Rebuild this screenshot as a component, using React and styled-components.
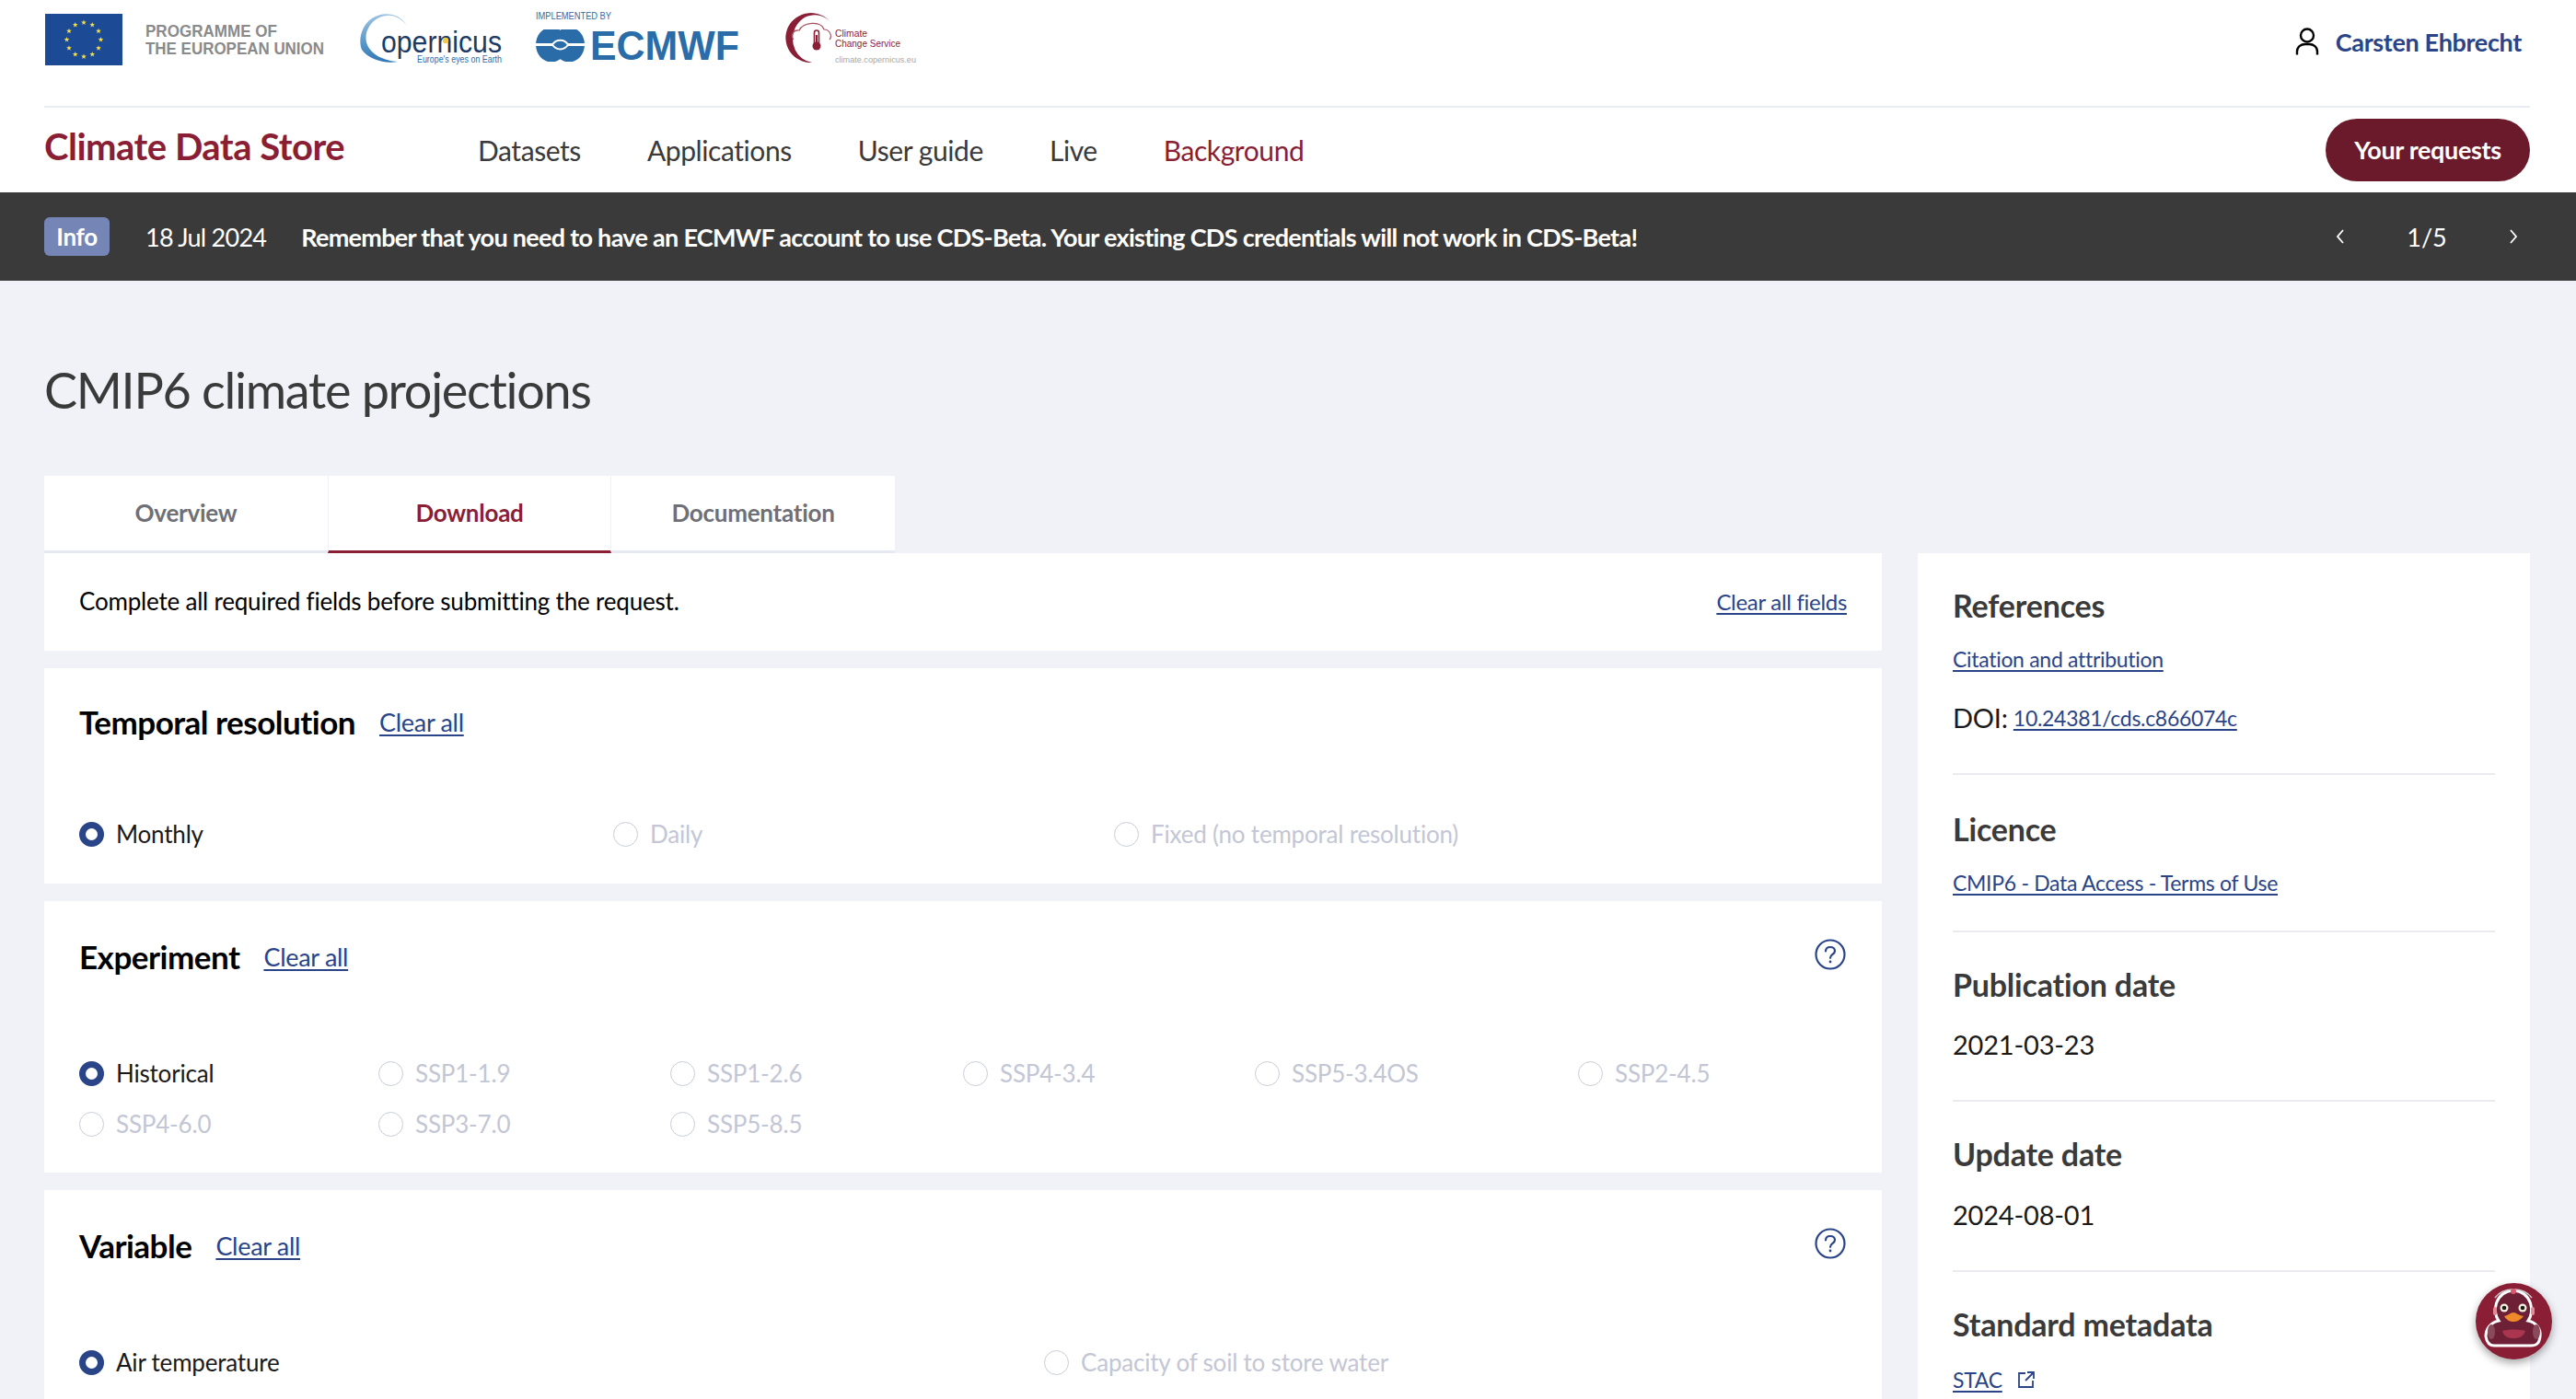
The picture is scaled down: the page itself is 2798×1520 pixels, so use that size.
import React from 'react';
import styled, { createGlobalStyle } from 'styled-components';

const GlobalStyle = createGlobalStyle`
  html, body {
    margin: 0;
    height: 100%;
    overflow: hidden;
    background: #f0f2f7;
    font-family: Lato, "Open Sans", sans-serif;
    color: #000;
  }
  * { box-sizing: border-box; }
`;

const Header = styled.header`
  background: #fff;
  padding: 0 50px 0 48px;
`;

const LogoRow = styled.div`
  height: 117px;
  display: flex;
  align-items: flex-start;
  justify-content: space-between;
  border-bottom: 2px solid #e9ebf3;
`;

const Logos = styled.div`
  display: flex;
  align-items: flex-start;
`;

const Logo = styled.svg`
  display: block;
  flex: none;
  margin-left: ${props => props.$gap || 0}px;
`;

const UserBox = styled.a`
  display: flex;
  align-items: center;
  gap: 18px;
  height: 90px;
  padding-right: 9px;
  color: #2a4488;
  font-size: 27px;
  font-weight: 700;
  letter-spacing: -0.35px;
`;

const NavRow = styled.nav`
  height: 92px;
  display: flex;
  align-items: center;
`;

const Brand = styled.div`
  width: 471px;
  margin-top: -8px;
  color: #8a1e35;
  font-size: 40px;
  font-weight: 700;
  letter-spacing: -0.5px;
`;

const NavList = styled.ul`
  display: flex;
  gap: 72px;
  flex: 1;
  margin: 0;
  padding: 0;
  list-style: none;
`;

const NavItem = styled.li`
  color: ${props => props.$active ? '#8a1e35' : '#3a3a3a'};
  font-size: 30px;
  letter-spacing: -0.42px;
`;

const RequestsButton = styled.button`
  width: 222px;
  height: 68px;
  padding: 0 0 2px;
  border: none;
  border-radius: 34px;
  background: #6b1a2b;
  color: #fff;
  font-family: inherit;
  font-size: 27px;
  font-weight: 700;
  letter-spacing: -0.35px;
`;

const Banner = styled.div`
  height: 96px;
  display: flex;
  align-items: center;
  padding: 0 48px;
  background: #3a3a3a;
  color: #fff;
`;

const Badge = styled.span`
  width: 71px;
  height: 42px;
  display: flex;
  align-items: center;
  justify-content: center;
  border-radius: 6px;
  background: #7586b6;
  font-size: 26px;
  font-weight: 700;
  letter-spacing: -0.3px;
`;

const BannerDate = styled.span`
  margin-left: 39px;
  font-size: 27px;
  letter-spacing: -0.75px;
`;

const BannerText = styled.strong`
  margin-left: 38px;
  flex: 1;
  font-size: 27px;
  letter-spacing: -0.7px;
`;

const Pager = styled.div`
  display: flex;
  align-items: center;
  width: 216px;
  justify-content: space-between;
  padding-right: 16px;
  font-size: 27px;
  margin-right: -2px;
`;

const Title = styled.h1`
  margin: 0;
  padding: 86px 48px 0;
  height: 212px;
  color: #3a3a3a;
  font-size: 54px;
  font-weight: 400;
  line-height: 66px;
  letter-spacing: -1.3px;
`;

const Tabs = styled.div`
  display: flex;
  margin-left: 48px;
`;

const Tab = styled.div`
  width: 308px;
  height: 84px;
  padding-top: 24px;
  background: #fff;
  border-bottom: 3px solid ${props => props.$active ? '#8a1e35' : '#e6e9f1'};
  border-left: ${props => props.$active ? '1px solid #f0f2f7' : 'none'};
  border-right: ${props => props.$active ? '1px solid #f0f2f7' : 'none'};
  color: ${props => props.$active ? '#8a1e35' : '#6f7076'};
  font-size: 26px;
  font-weight: 700;
  line-height: 32px;
  letter-spacing: -0.25px;
  text-align: center;
`;

const Columns = styled.div`
  display: flex;
  align-items: flex-start;
  gap: 39px;
  padding: 0 50px 0 48px;
`;

const FormColumn = styled.main`
  width: 1996px;
  flex: none;
  display: flex;
  flex-direction: column;
  gap: 19px;
`;

const NoticePanel = styled.section`
  height: 106px;
  display: flex;
  align-items: center;
  justify-content: space-between;
  padding: 0 38px 2px 38px;
  background: #fff;
  font-size: 26px;
  letter-spacing: -0.2px;
`;

const TextLink = styled.a`
  color: #2a4488;
  font-size: ${props => props.$size || 27}px;
  text-decoration: underline;
  text-underline-offset: 3px;
  text-decoration-thickness: 2px;
  letter-spacing: -0.3px;
`;

const Panel = styled.section`
  height: ${props => props.$height}px;
  padding: ${props => props.$top || 39}px 39px 0 38px;
  background: #fff;
`;

const PanelHead = styled.div`
  height: 42px;
  display: flex;
  align-items: center;
  gap: 26px;
`;

const PanelTitle = styled.h2`
  margin: 0;
  font-size: 35px;
  font-weight: 700;
  letter-spacing: -0.5px;
`;

const HelpButton = styled.span`
  margin-left: auto;
  margin-top: -4px;
  display: flex;
`;

const RadioGrid = styled.div`
  display: grid;
  grid-template-columns: ${props => props.$columns};
  row-gap: 13px;
  margin-top: ${props => props.$top || 85}px;
`;

const Radio = styled.label`
  height: 42px;
  display: flex;
  align-items: center;
  gap: 13px;
  color: ${props => props.$disabled ? '#c3c6d4' : '#1a1a1a'};
  font-size: 26px;
  letter-spacing: -0.2px;
  white-space: nowrap;
`;

const RadioMark = styled.span`
  width: 27px;
  height: 27px;
  flex: none;
  border-radius: 50%;
  background: #fff;
  border: ${props => props.$checked ? '7px solid #2a4488' : '1.5px solid #c9ccd8'};
`;

const Sidebar = styled.aside`
  width: 665px;
  height: 930px;
  flex: none;
  padding: 0 38px;
  background: #fff;
`;

const SideSection = styled.div`
  height: ${props => props.$height}px;
  padding-top: ${props => props.$top || 36}px;
  border-bottom: ${props => props.$last ? 'none' : '2px solid #e9ebf0'};
`;

const SideTitle = styled.h3`
  margin: 0;
  color: #3a3a3a;
  font-size: 34px;
  font-weight: 700;
  line-height: 42px;
  letter-spacing: -0.2px;
`;

const SideLine = styled.div`
  display: flex;
  align-items: center;
  gap: ${props => props.$gap || 6}px;
  margin-top: ${props => props.$top || 20}px;
  color: #1a1a1a;
  font-size: 29px;
  line-height: 36px;
  letter-spacing: -0.2px;
`;

const ChatButton = styled.button`
  position: fixed;
  left: 2689px;
  top: 1394px;
  width: 83px;
  height: 83px;
  padding: 0;
  border: none;
  border-radius: 50%;
  background: #8a1e35;
  box-shadow: 0 4px 10px rgba(0, 0, 0, 0.35);
`;

const starPoints = (cx, cy, r) =>
  Array.from({ length: 10 }, (_, i) => {
    const a = (i * Math.PI) / 5;
    const d = i % 2 ? r * 0.42 : r;
    return `${(cx + d * Math.sin(a)).toFixed(2)},${(cy - d * Math.cos(a)).toFixed(2)}`;
  }).join(' ');

const flagStars = Array.from({ length: 12 }, (_, i) => {
  const a = (i * Math.PI) / 6;
  return starPoints(43 + 18.5 * Math.sin(a), 43 - 18.5 * Math.cos(a), 3);
});

const EuLogo = () => (
  <Logo width="310" height="90" viewBox="0 0 310 90">
    <rect x="1" y="15" width="84" height="56" fill="#1c4a94" />
    {flagStars.map((points, i) => (
      <polygon key={i} points={points} fill="#f4e04a" />
    ))}
    <text x="110" y="40" textLength="143" lengthAdjust="spacingAndGlyphs" fontFamily="Liberation Sans" fontWeight="700" fontSize="17.5" fill="#8a8a8a">PROGRAMME OF</text>
    <text x="110" y="59" textLength="194" lengthAdjust="spacingAndGlyphs" fontFamily="Liberation Sans" fontWeight="700" fontSize="17.5" fill="#8a8a8a">THE EUROPEAN UNION</text>
  </Logo>
);

const CopernicusLogo = () => (
  <Logo width="180" height="90" viewBox="0 0 180 90" $gap={32}>
    <defs>
      <linearGradient id="copernicusArc" x1="0" y1="0" x2="0" y2="1">
        <stop offset="0" stopColor="#9cc4e4" />
        <stop offset="1" stopColor="#2f78b5" />
      </linearGradient>
    </defs>
    <path d="M 52 28 C 44 14 26 12 14 20 C 2 28 -1 44 3 54 C 10 64 28 70 42 67 C 28 66 12 60 8 46 C 5 32 16 18 30 17 C 38 16 46 20 52 28 Z" fill="url(#copernicusArc)" />
    <text x="24" y="57" textLength="131" lengthAdjust="spacingAndGlyphs" fontFamily="Liberation Sans" fontSize="33" fill="#1b3a67">opernicus</text>
    <circle cx="94" cy="44" r="3.2" fill="#f2c94c" />
    <text x="63" y="68" textLength="92" lengthAdjust="spacingAndGlyphs" fontFamily="Liberation Sans" fontSize="10" fill="#2a6ca8">Europe's eyes on Earth</text>
  </Logo>
);

const EcmwfLogo = () => (
  <Logo width="226" height="90" viewBox="0 0 226 90" $gap={12}>
    <defs>
      <clipPath id="ecmwfGlyph">
        <rect x="0" y="32" width="54" height="35" />
      </clipPath>
    </defs>
    <text x="0" y="21" textLength="82" lengthAdjust="spacingAndGlyphs" fontFamily="Liberation Sans" fontSize="10" fill="#2a6ca8">IMPLEMENTED BY</text>
    <g clipPath="url(#ecmwfGlyph)">
      <ellipse cx="17" cy="48.5" rx="17" ry="19" fill="#2a6ca8" />
      <ellipse cx="36" cy="48.5" rx="17" ry="19" fill="#2a6ca8" />
    </g>
    <rect x="0" y="47" width="18" height="3" fill="#fff" />
    <rect x="35" y="47" width="18" height="3" fill="#fff" />
    <path d="M 18 48.5 C 22 42 31 42 35 48.5 C 31 55 22 55 18 48.5" fill="none" stroke="#fff" strokeWidth="2" />
    <text x="59" y="65" textLength="162" lengthAdjust="spacingAndGlyphs" fontFamily="Liberation Sans" fontWeight="700" fontSize="44" fill="#2a6ca8">ECMWF</text>
  </Logo>
);

const ClimateLogo = () => (
  <Logo width="150" height="90" viewBox="0 0 150 90" $gap={44}>
    <path d="M 51 25 A 27.5 27 0 1 0 30 68 A 24 26 0 1 1 51 25 Z" fill="#8a1e35" />
    <path d="M 10 43 C 6 38 10 32 16 33 C 20 24 40 22 43 32 C 50 32 52 40 49 43" fill="none" stroke="#a8505f" strokeWidth="1.2" />
    <rect x="32.5" y="33" width="5" height="16" rx="2.5" fill="#fff" stroke="#8a1e35" strokeWidth="1.6" />
    <circle cx="35" cy="50" r="4.5" fill="#8a1e35" />
    <rect x="34" y="38" width="2" height="10" fill="#8a1e35" />
    <text x="55" y="40" textLength="35" lengthAdjust="spacingAndGlyphs" fontFamily="Liberation Sans" fontSize="10.5" fill="#8a1e35">Climate</text>
    <text x="55" y="51" textLength="71" lengthAdjust="spacingAndGlyphs" fontFamily="Liberation Sans" fontSize="10.5" fill="#8a1e35">Change Service</text>
    <text x="55" y="68" textLength="88" lengthAdjust="spacingAndGlyphs" fontFamily="Liberation Sans" fontSize="9.5" fill="#a8a8a8">climate.copernicus.eu</text>
  </Logo>
);

const UserIcon = () => (
  <svg width="26" height="30" viewBox="0 0 26 30" fill="none" stroke="#000" strokeWidth="2.4">
    <circle cx="13" cy="8.5" r="7" />
    <path d="M 2 29.5 V 26 C 2 21 6 18 11 18 H 15 C 20 18 24 21 24 26 V 29.5" />
  </svg>
);

const Chevron = ({ left }) => (
  <svg width="12" height="18" viewBox="0 0 12 18" fill="none" stroke="#fff" strokeWidth="1.8">
    <path d={left ? 'M 9 2 L 3 9 L 9 16' : 'M 3 2 L 9 9 L 3 16'} />
  </svg>
);

const HelpIcon = () => (
  <svg width="34" height="34" viewBox="0 0 34 34" fill="none" stroke="#2a4488" strokeWidth="2.2">
    <circle cx="17" cy="17" r="15.5" />
    <path d="M 12 13.5 C 12 10.5 14.3 9 17 9 C 20 9 22 10.8 22 13.2 C 22 16.8 17 17 17 20.8" strokeLinecap="round" />
    <circle cx="17" cy="25" r="1.4" fill="#2a4488" stroke="none" />
  </svg>
);

const ExternalIcon = () => (
  <svg width="20" height="20" viewBox="0 0 20 20" fill="none" stroke="#2a4488" strokeWidth="1.8">
    <path d="M 9 3 H 2 V 18 H 17 V 11" />
    <path d="M 11 2 H 18 V 9 M 18 2 L 9 11" />
  </svg>
);

const DuckIcon = () => (
  <svg width="83" height="83" viewBox="0 0 83 83">
    <path d="M 25 41 C 18 32 20 10 41 8 C 62 10 64 32 57 41 C 66 43 71 50 70 58 C 69 66 66 68 60 68 H 20 C 14 68 12 64 11 58 C 11 50 16 43 25 41 Z" fill="#6e2136" stroke="#fff" strokeWidth="3" />
    <path d="M 21 16 C 30 4 52 4 61 16" fill="none" stroke="#cfcfcf" strokeWidth="1.5" />
    <circle cx="41" cy="9" r="3" fill="#e0566f" />
    <rect x="19" y="26" width="4" height="9" rx="2" fill="#e58b98" />
    <rect x="60" y="26" width="4" height="9" rx="2" fill="#e58b98" />
    <circle cx="31" cy="27" r="4.5" fill="#f5f0dc" />
    <circle cx="51" cy="27" r="4.5" fill="#f5f0dc" />
    <circle cx="31" cy="27" r="2.3" fill="#1b1b1b" />
    <circle cx="51" cy="27" r="2.3" fill="#1b1b1b" />
    <path d="M 31 36 C 36 35 38 32 41 32 C 44 32 46 35 52 36 C 48 41 44 42 41 42 C 38 42 34 41 31 36 Z" fill="#ef8a2a" />
    <path d="M 29 52 C 36 50 46 50 54 52 C 52 59 46 60 41 60 C 36 60 31 59 29 52 Z" fill="#a9354f" />
    <ellipse cx="17" cy="53" rx="4" ry="8" fill="#8a4a5c" />
    <ellipse cx="66" cy="53" rx="4" ry="8" fill="#8a4a5c" />
  </svg>
);

const RadioItem = ({ label, checked }) => (
  <Radio $disabled={!checked}>
    <RadioMark $checked={checked} />
    {label}
  </Radio>
);

const App = () => (
  <>
    <GlobalStyle />
    <Header>
      <LogoRow>
        <Logos>
          <EuLogo />
          <CopernicusLogo />
          <EcmwfLogo />
          <ClimateLogo />
        </Logos>
        <UserBox>
          <UserIcon />
          Carsten Ehbrecht
        </UserBox>
      </LogoRow>
      <NavRow>
        <Brand>Climate Data Store</Brand>
        <NavList>
          <NavItem>Datasets</NavItem>
          <NavItem>Applications</NavItem>
          <NavItem>User guide</NavItem>
          <NavItem>Live</NavItem>
          <NavItem $active>Background</NavItem>
        </NavList>
        <RequestsButton>Your requests</RequestsButton>
      </NavRow>
    </Header>

    <Banner>
      <Badge>Info</Badge>
      <BannerDate>18 Jul 2024</BannerDate>
      <BannerText>Remember that you need to have an ECMWF account to use CDS-Beta. Your existing CDS credentials will not work in CDS-Beta!</BannerText>
      <Pager>
        <Chevron left />
        1/5
        <Chevron />
      </Pager>
    </Banner>

    <Title>CMIP6 climate projections</Title>

    <Tabs>
      <Tab>Overview</Tab>
      <Tab $active>Download</Tab>
      <Tab>Documentation</Tab>
    </Tabs>

    <Columns>
      <FormColumn>
        <NoticePanel>
          Complete all required fields before submitting the request.
          <TextLink $size={24}>Clear all fields</TextLink>
        </NoticePanel>

        <Panel $height={234} $top={37}>
          <PanelHead>
            <PanelTitle>Temporal resolution</PanelTitle>
            <TextLink>Clear all</TextLink>
          </PanelHead>
          <RadioGrid $columns="580px 544px 1fr" $top={80}>
            <RadioItem label="Monthly" checked />
            <RadioItem label="Daily" />
            <RadioItem label="Fixed (no temporal resolution)" />
          </RadioGrid>
        </Panel>

        <Panel $height={295}>
          <PanelHead>
            <PanelTitle>Experiment</PanelTitle>
            <TextLink>Clear all</TextLink>
            <HelpButton><HelpIcon /></HelpButton>
          </PanelHead>
          <RadioGrid $columns="325px 317px 318px 317px 351px 1fr">
            <RadioItem label="Historical" checked />
            <RadioItem label="SSP1-1.9" />
            <RadioItem label="SSP1-2.6" />
            <RadioItem label="SSP4-3.4" />
            <RadioItem label="SSP5-3.4OS" />
            <RadioItem label="SSP2-4.5" />
            <RadioItem label="SSP4-6.0" />
            <RadioItem label="SSP3-7.0" />
            <RadioItem label="SSP5-8.5" />
          </RadioGrid>
        </Panel>

        <Panel $height={300}>
          <PanelHead>
            <PanelTitle>Variable</PanelTitle>
            <TextLink>Clear all</TextLink>
            <HelpButton><HelpIcon /></HelpButton>
          </PanelHead>
          <RadioGrid $columns="1048px 1fr">
            <RadioItem label="Air temperature" checked />
            <RadioItem label="Capacity of soil to store water" />
          </RadioGrid>
        </Panel>
      </FormColumn>

      <Sidebar>
        <SideSection $height={241}>
          <SideTitle>References</SideTitle>
          <SideLine $top={19}><TextLink $size={23}>Citation and attribution</TextLink></SideLine>
          <SideLine $top={28}>DOI: <TextLink $size={23}>10.24381/cds.c866074c</TextLink></SideLine>
        </SideSection>
        <SideSection $height={171} $top={38}>
          <SideTitle>Licence</SideTitle>
          <SideLine $top={19}><TextLink $size={23}>CMIP6 - Data Access - Terms of Use</TextLink></SideLine>
        </SideSection>
        <SideSection $height={184}>
          <SideTitle>Publication date</SideTitle>
          <SideLine $top={26}>2021-03-23</SideLine>
        </SideSection>
        <SideSection $height={185}>
          <SideTitle>Update date</SideTitle>
          <SideLine $top={27}>2024-08-01</SideLine>
        </SideSection>
        <SideSection $height={149} $last>
          <SideTitle>Standard metadata</SideTitle>
          <SideLine $top={21} $gap={16}><TextLink $size={23}>STAC</TextLink><ExternalIcon /></SideLine>
        </SideSection>
      </Sidebar>
    </Columns>

    <ChatButton><DuckIcon /></ChatButton>
  </>
);

export default App;
